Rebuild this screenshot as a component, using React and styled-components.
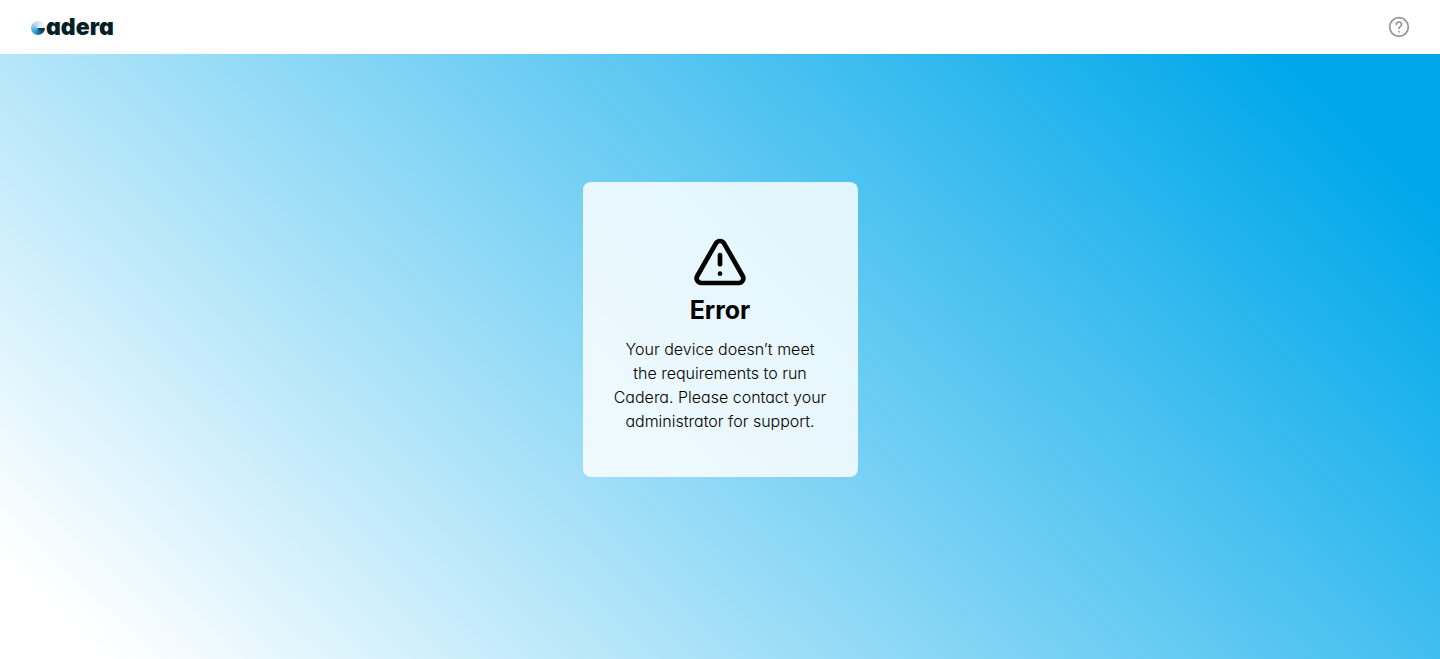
import React from "react";
import styled, { createGlobalStyle } from "styled-components";
import { TriangleAlert } from "lucide-react";

const GlobalStyle = createGlobalStyle`
  *, *::before, *::after { box-sizing: border-box; }
  body {
    margin: 0;
    color: #000;
    font-family: Inter, "Liberation Sans", sans-serif;
    font-feature-settings: "cv11";
  }
`;

const Page = styled.div`
  display: flex;
  flex-direction: column;
  min-height: 100vh;
`;

const Header = styled.header`
  display: flex;
  align-items: center;
  justify-content: space-between;
  height: 54px;
  padding: 0 30px;
  background: #fff;
`;

const Logo = styled.a`
  display: flex;
  align-items: center;
  gap: 1px;
  color: #061e26;
  text-decoration: none;
`;

const LogoMark = styled.span`
  width: 14px;
  height: 14px;
  margin: 2px 0 0 1px;
  border-radius: 50%;
  background: conic-gradient(
    from 90deg,
    #0a2936 0deg,
    #17597c 60deg,
    #2a9ee0 125deg,
    #6dbbe8 175deg,
    #b4d6ea 225deg,
    #d3e6f2 280deg,
    #f4f9fc 350deg,
    #ffffff 360deg
  );
`;

const LogoName = styled.span`
  font-size: 23px;
  line-height: 28px;
  font-weight: 900;
`;

const HelpButton = styled.button`
  display: flex;
  padding: 0;
  border: 0;
  background: none;
  color: #959595;
  cursor: pointer;
`;

const Main = styled.main`
  display: flex;
  flex: 1;
  align-items: center;
  justify-content: center;
  padding: 24px 24px 78px;
  background: linear-gradient(44deg, #ffffff 5%, #00a8ea 92%);
`;

const Card = styled.section`
  display: flex;
  flex-direction: column;
  align-items: center;
  width: 275px;
  padding: 52px 28px 44px;
  border-radius: 8px;
  background: rgba(255, 255, 255, 0.83);
  text-align: center;
`;

const Title = styled.h1`
  margin: 0 0 7px;
  font-size: 25px;
  line-height: 40px;
  font-weight: 700;
`;

const Message = styled.p`
  margin: 0;
  font-size: 16px;
  line-height: 24px;
  font-weight: 300;
`;

function HelpIcon() {
  return (
    <svg width="22" height="22" viewBox="0 0 22 22" fill="none" stroke="currentColor" strokeWidth="1.7" strokeLinecap="round" strokeLinejoin="round" aria-hidden="true">
      <circle cx="11" cy="11" r="9.3" />
      <path d="M8.4 8.5a2.6 2.6 0 0 1 5.2.2c0 1.8-2.6 2-2.6 3.7" />
      <path d="M11 15.7v.1" />
    </svg>
  );
}

export default function App() {
  return (
    <>
      <GlobalStyle />
      <Page>
        <Header>
          <Logo href="#" aria-label="Cadera">
            <LogoMark />
            <LogoName>adera</LogoName>
          </Logo>
          <HelpButton type="button" aria-label="Help">
            <HelpIcon />
          </HelpButton>
        </Header>
        <Main>
          <Card role="alert">
            <TriangleAlert size={56} strokeWidth={2} aria-hidden="true" />
            <Title>Error</Title>
            <Message>
              Your device doesn’t meet
              <br />
              the requirements to run
              <br />
              Cadera. Please contact your
              <br />
              administrator for support.
            </Message>
          </Card>
        </Main>
      </Page>
    </>
  );
}
